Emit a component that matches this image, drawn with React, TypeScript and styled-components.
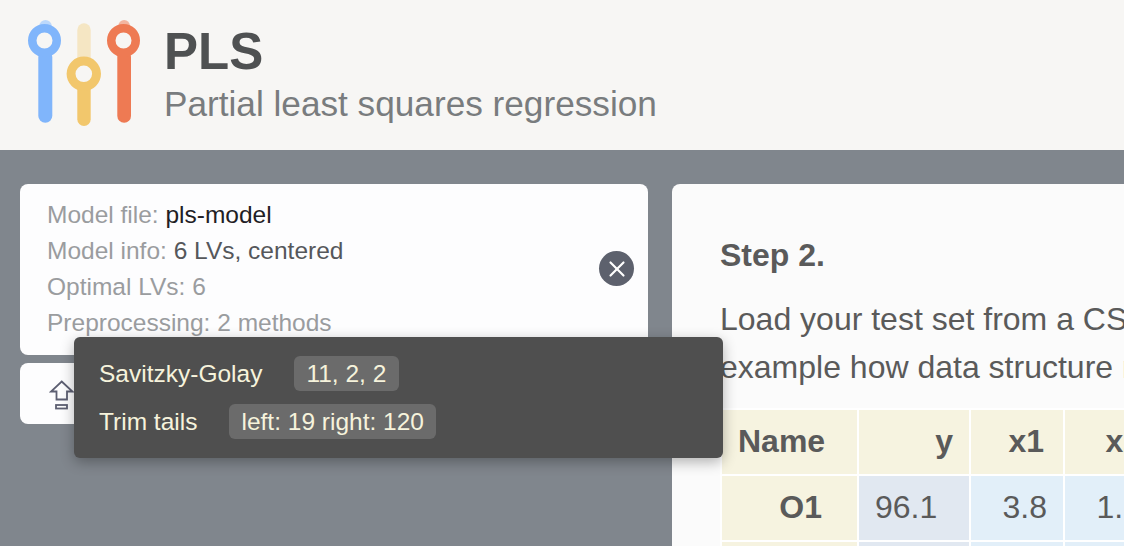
import React from 'react';
import styled, { createGlobalStyle } from 'styled-components';
import { X } from 'lucide-react';

const GlobalStyle = createGlobalStyle`
  html, body {
    margin: 0;
    height: 100%;
    overflow: hidden;
    background: #80868d;
    font-family: "Liberation Sans", Arial, sans-serif;
  }
`;

const Page = styled.div`
  width: 1124px;
  height: 546px;
  overflow: hidden;
  background: #80868d;
`;

const Header = styled.header`
  height: 150px;
  box-sizing: border-box;
  padding: 20px 0 0 26px;
  display: flex;
  gap: 22px;
  background: #f7f6f4;
`;

const TitleBlock = styled.div`
  display: flex;
  flex-direction: column;
  padding-top: 5px;
`;

const AppName = styled.h1`
  margin: 0;
  font-size: 51px;
  line-height: 54px;
  font-weight: 700;
  color: #4f5152;
`;

const AppSubtitle = styled.div`
  font-size: 35.2px;
  line-height: 50px;
  color: #797c7e;
`;

const Main = styled.main`
  display: flex;
  gap: 24px;
  padding: 34px 0 0 20px;
`;

const LeftColumn = styled.div`
  position: relative;
  width: 628px;
  flex: none;
  display: flex;
  flex-direction: column;
  gap: 8px;
`;

const ModelCard = styled.section`
  position: relative;
  height: 171px;
  box-sizing: border-box;
  padding: 13px 27px;
  background: #fdfdfe;
  border-radius: 8px;
`;

const InfoRow = styled.div`
  font-size: 24.5px;
  line-height: 36px;
  color: #9a9c9f;
`;

const InfoValue = styled.span<{ $dark?: boolean }>`
  color: ${p => (p.$dark ? '#1f2024' : '#55575b')};
`;

const CloseButton = styled.button`
  position: absolute;
  right: 14px;
  top: 67px;
  width: 35px;
  height: 35px;
  padding: 0;
  border: 0;
  border-radius: 50%;
  display: flex;
  align-items: center;
  justify-content: center;
  background: #5d616d;
  color: #fff;
`;

const UploadCard = styled.div`
  height: 61px;
  box-sizing: border-box;
  padding: 17px 0 0 29px;
  background: #fdfdfe;
  border-radius: 8px;
`;

const Tooltip = styled.div`
  position: absolute;
  left: 54px;
  top: 153px;
  width: 649px;
  height: 121px;
  box-sizing: border-box;
  padding: 18px 25px;
  display: flex;
  flex-direction: column;
  gap: 11px;
  background: #4f4f4f;
  border-radius: 6px;
  box-shadow: 0 4px 14px rgba(0, 0, 0, 0.3);
`;

const TooltipRow = styled.div`
  display: flex;
  align-items: center;
  gap: 31.5px;
  height: 37px;
  font-size: 24.5px;
  color: #f6f3dc;
`;

const Chip = styled.span`
  height: 35px;
  line-height: 35px;
  padding: 0 12.5px;
  border-radius: 6px;
  background: #6b6b6b;
`;

const ContentCard = styled.section`
  flex: 1;
  height: 400px;
  box-sizing: border-box;
  padding: 50px 0 0 48px;
  overflow: hidden;
  background: #fbfbfb;
  border-radius: 8px 0 0 0;
  color: #5a5a5a;
`;

const StepTitle = styled.h2`
  margin: 0 0 19px;
  font-size: 32px;
  line-height: 42px;
  font-weight: 700;
`;

const Paragraph = styled.p`
  margin: 0 0 17px;
  width: 700px;
  font-size: 32px;
  line-height: 48px;
  white-space: nowrap;
`;

const DataTable = styled.table`
  border-collapse: separate;
  border-spacing: 2px;
  margin: 0;
  background: #fff;
  table-layout: fixed;
  width: 439px;
  font-size: 32px;
`;

const HeadCell = styled.th<{ $w?: number; $left?: boolean; $pad?: number }>`
  width: ${p => (p.$w ? `${p.$w}px` : 'auto')};
  height: 64px;
  padding: 0 ${p => p.$pad ?? 16}px 2px 16px;
  box-sizing: border-box;
  background: #f6f3e0;
  font-weight: 700;
  text-align: ${p => (p.$left ? 'left' : 'right')};
`;

const DataCell = styled.td<{ $bg: string; $left?: boolean }>`
  height: 64px;
  padding: 0 16px 2px;
  box-sizing: border-box;
  background: ${p => p.$bg};
  text-align: ${p => (p.$left ? 'left' : 'right')};
`;

const LogoIcon = () => (
  <svg width="116" height="110" viewBox="0 0 116 110" fill="none">
    <rect x="13.3" y="0" width="12.4" height="30" rx="6.2" fill="#bcd8fb" />
    <rect x="51.3" y="3.3" width="13.4" height="50" rx="6.7" fill="#f5e6c3" />
    <rect x="92.3" y="0" width="11.7" height="30" rx="5.8" fill="#f3b5a0" />
    <rect x="12.3" y="30" width="14" height="72.7" rx="7" fill="#80b5fb" />
    <rect x="51.3" y="60" width="13.4" height="46" rx="6.7" fill="#f2c76c" />
    <rect x="91.3" y="30" width="13.7" height="72.7" rx="6.8" fill="#ee7a53" />
    <circle cx="18.5" cy="20.5" r="12.25" fill="#f7f6f4" stroke="#80b5fb" strokeWidth="8.5" />
    <circle cx="57.8" cy="53.8" r="12.75" fill="#f7f6f4" stroke="#f2c76c" strokeWidth="8.9" />
    <circle cx="97.5" cy="20.5" r="12.25" fill="#f7f6f4" stroke="#ee7a53" strokeWidth="8.5" />
  </svg>
);

const UploadIcon = () => (
  <svg width="26" height="32" viewBox="0 0 26 32" fill="none" stroke="#5d5f72" strokeWidth="1.8">
    <path d="M12.7 1.5 L23.5 11.5 H18 V19.5 H7.5 V11.5 H2 Z" strokeLinejoin="miter" />
    <rect x="7" y="25" width="11" height="3.5" />
  </svg>
);

export default function App() {
  return (
    <Page>
      <GlobalStyle />
      <Header>
        <LogoIcon />
        <TitleBlock>
          <AppName>PLS</AppName>
          <AppSubtitle>Partial least squares regression</AppSubtitle>
        </TitleBlock>
      </Header>
      <Main>
        <LeftColumn>
          <ModelCard>
            <InfoRow>Model file: <InfoValue $dark>pls-model</InfoValue></InfoRow>
            <InfoRow>Model info: <InfoValue>6 LVs, centered</InfoValue></InfoRow>
            <InfoRow>Optimal LVs: 6</InfoRow>
            <InfoRow>Preprocessing: 2 methods</InfoRow>
            <CloseButton aria-label="Remove model"><X size={26} strokeWidth={2} /></CloseButton>
          </ModelCard>
          <UploadCard><UploadIcon /></UploadCard>
          <Tooltip>
            <TooltipRow>Savitzky-Golay <Chip>11, 2, 2</Chip></TooltipRow>
            <TooltipRow>Trim tails <Chip>left: 19 right: 120</Chip></TooltipRow>
          </Tooltip>
        </LeftColumn>
        <ContentCard>
          <StepTitle>Step 2.</StepTitle>
          <Paragraph>
            Load your test set from a CSV file, see<br />
            example how data structure must look like:
          </Paragraph>
          <DataTable>
            <thead>
              <tr>
                <HeadCell $w={135} $left>Name</HeadCell>
                <HeadCell $w={110}>y</HeadCell>
                <HeadCell $w={92} $pad={19}>x1</HeadCell>
                <HeadCell $w={92}>x2</HeadCell>
              </tr>
            </thead>
            <tbody>
              <tr>
                <HeadCell as="td" $pad={35}>O1</HeadCell>
                <DataCell $bg="#e1e8f1" $left>96.1</DataCell>
                <DataCell $bg="#e2eff9">3.8</DataCell>
                <DataCell $bg="#e2eff9">1.2</DataCell>
              </tr>
              <tr>
                <HeadCell as="td" />
                <DataCell $bg="#e1e8f1" />
                <DataCell $bg="#e2eff9" />
                <DataCell $bg="#e2eff9" />
              </tr>
            </tbody>
          </DataTable>
        </ContentCard>
      </Main>
    </Page>
  );
}
